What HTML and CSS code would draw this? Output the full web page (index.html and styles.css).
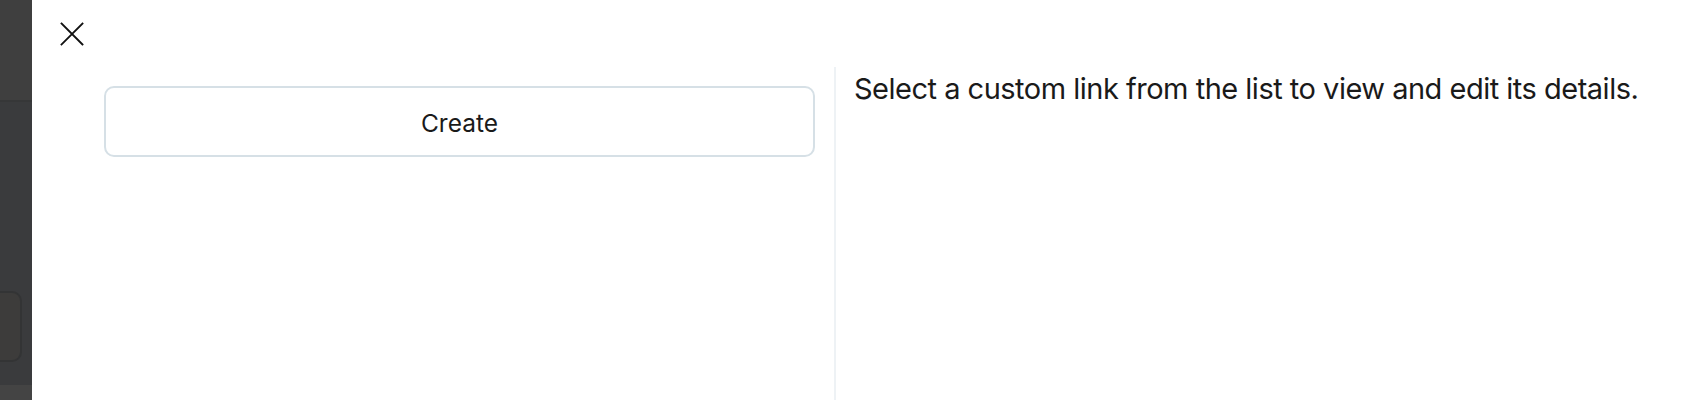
FILE: index.html
```html
<!DOCTYPE html>
<html lang="en">
<head>
<meta charset="utf-8">
<title>Custom links</title>
<link rel="stylesheet" href="styles.css">
</head>
<body>
<div class="app">
  <aside class="backdrop">
    <div class="bd-top"></div>
    <div class="bd-main">
      <div class="bd-card"></div>
    </div>
    <div class="bd-bottom"></div>
  </aside>
  <main class="panel">
    <header class="panel-header">
      <button class="close" aria-label="Close">
        <svg width="24" height="24" viewBox="0 0 24 24" fill="none" stroke="#111" stroke-width="1.8" stroke-linecap="square">
          <path d="M1.5 1.5 L22.5 22.5 M22.5 1.5 L1.5 22.5"/>
        </svg>
      </button>
    </header>
    <div class="panel-body">
      <section class="list-col">
        <button class="create-btn">Create</button>
      </section>
      <div class="divider"></div>
      <section class="detail-col">
        <p class="hint">Select a custom link from the list to view and edit its details.</p>
      </section>
    </div>
  </main>
</div>
</body>
</html>
```
FILE: styles.css
```css
* { box-sizing: border-box; }
html, body { margin: 0; padding: 0; height: 100%; }
body {
  font-family: Inter, "Noto Sans", "Liberation Sans", sans-serif;
  color: #1a1a1a;
  background: #fff;
  overflow: hidden;
}
.app {
  display: flex;
  height: 400px;
}
.backdrop {
  width: 32px;
  flex: 0 0 32px;
  display: flex;
  flex-direction: column;
  background: #3a3b3d;
}
.bd-top {
  height: 102px;
  background: #3f3f3f;
  border-bottom: 2px solid #363738;
}
.bd-main {
  flex: 1;
  padding-top: 189px;
}
.bd-card {
  margin-left: -20px;
  width: 42px;
  height: 71px;
  border: 2px solid #333435;
  border-radius: 10px;
  background: #3d3c3b;
}
.bd-bottom {
  height: 15px;
  background: #444;
}
.panel {
  flex: 1;
  display: flex;
  flex-direction: column;
  min-width: 0;
}
.panel-header {
  height: 67px;
  padding: 22px 0 0 28px;
}
.close {
  display: block;
  width: 24px;
  height: 24px;
  padding: 0;
  border: 0;
  background: none;
  cursor: pointer;
}
.close svg { display: block; }
.panel-body {
  flex: 1;
  display: flex;
}
.list-col {
  width: 802px;
  flex: 0 0 802px;
  padding: 19px 19px 0 72px;
}
.create-btn {
  display: block;
  width: 100%;
  height: 71px;
  padding: 3px 0 0;
  border: 2px solid #d6e0e6;
  border-radius: 10px;
  background: #fff;
  font-family: inherit;
  font-size: 24.5px;
  font-weight: 400;
  color: #1a1a1a;
  cursor: pointer;
}
.divider {
  width: 2px;
  flex: 0 0 2px;
  background: #eef2f5;
}
.detail-col {
  flex: 1;
  padding: 0 0 0 18px;
}
.hint {
  margin: 0;
  padding-top: 4px;
  font-size: 29px;
  line-height: 36px;
  color: #1a1a1a;
  letter-spacing: -0.5px;
  white-space: nowrap;
}
```
